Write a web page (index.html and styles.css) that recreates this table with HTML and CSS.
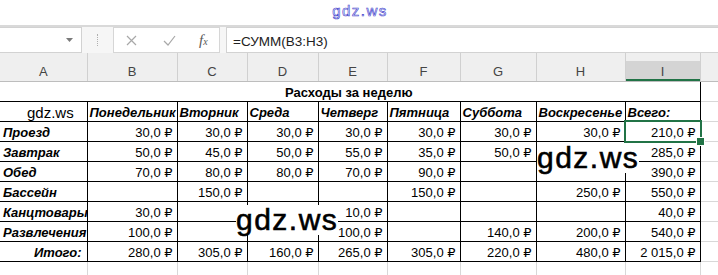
FILE: index.html
```html
<!DOCTYPE html>
<html lang="ru">
<head>
<meta charset="utf-8">
<title>Расходы за неделю</title>
<link rel="stylesheet" href="styles.css">
</head>
<body>
<div class="topbar"><span class="wm-top">gdz.ws</span></div>
<div class="fbar">
  <div class="namebox"><svg class="dd" width="7" height="4" viewBox="0 0 7 4"><path d="M0 0h7L3.5 4z" fill="#7a7a7a"/></svg></div>
  <div class="grip"><span class="dots"></span></div>
  <div class="btns">
    <svg class="ic" width="11" height="11" viewBox="0 0 11 11"><path d="M1 1l9 9M10 1l-9 9" stroke="#a8a8a8" stroke-width="1.2" fill="none"/></svg>
    <svg class="ic" width="13" height="11" viewBox="0 0 13 11"><path d="M1 6l4 4 7-9" stroke="#a8a8a8" stroke-width="1.2" fill="none"/></svg>
    <span class="fx">f<span class="fx-x">x</span></span>
  </div>
  <div class="formula">=СУММ(B3:H3)</div>
</div>
<table class="sheet">
  <colgroup>
    <col class="w87"><col class="w90"><col class="w70"><col class="w71"><col class="w69"><col class="w73"><col class="w76"><col class="w89"><col class="w75"><col class="w18">
  </colgroup>
  <thead>
    <tr><th>A</th><th>B</th><th>C</th><th>D</th><th>E</th><th>F</th><th>G</th><th>H</th><th class="sel">I</th><th></th></tr>
  </thead>
  <tbody>
    <tr><td class="title" colspan="9">Расходы за неделю</td><td class="g"></td></tr>
    <tr class="hdr"><td class="wm-a">gdz.ws</td><td>Понедельник</td><td>Вторник</td><td>Среда</td><td>Четверг</td><td>Пятница</td><td>Суббота</td><td>Воскресенье</td><td>Всего:</td><td class="g"></td></tr>
    <tr><td class="lbl">Проезд</td><td class="n">30,0&nbsp;₽</td><td class="n">30,0&nbsp;₽</td><td class="n">30,0&nbsp;₽</td><td class="n">30,0&nbsp;₽</td><td class="n">30,0&nbsp;₽</td><td class="n">30,0&nbsp;₽</td><td class="n">30,0&nbsp;₽</td><td class="n selcell">210,0&nbsp;₽</td><td class="g"></td></tr>
    <tr><td class="lbl">Завтрак</td><td class="n">50,0&nbsp;₽</td><td class="n">45,0&nbsp;₽</td><td class="n">50,0&nbsp;₽</td><td class="n">55,0&nbsp;₽</td><td class="n">35,0&nbsp;₽</td><td class="n">50,0&nbsp;₽</td><td class="n"></td><td class="n">285,0&nbsp;₽</td><td class="g"></td></tr>
    <tr><td class="lbl">Обед</td><td class="n">70,0&nbsp;₽</td><td class="n">80,0&nbsp;₽</td><td class="n">80,0&nbsp;₽</td><td class="n">70,0&nbsp;₽</td><td class="n">90,0&nbsp;₽</td><td class="n"></td><td class="n"></td><td class="n">390,0&nbsp;₽</td><td class="g"></td></tr>
    <tr><td class="lbl">Бассейн</td><td class="n"></td><td class="n">150,0&nbsp;₽</td><td class="n"></td><td class="n"></td><td class="n">150,0&nbsp;₽</td><td class="n"></td><td class="n">250,0&nbsp;₽</td><td class="n">550,0&nbsp;₽</td><td class="g"></td></tr>
    <tr><td class="lbl">Канцтовары</td><td class="n">30,0&nbsp;₽</td><td class="n"></td><td class="n"></td><td class="n">10,0&nbsp;₽</td><td class="n"></td><td class="n"></td><td class="n"></td><td class="n">40,0&nbsp;₽</td><td class="g"></td></tr>
    <tr><td class="lbl">Развлечения</td><td class="n">100,0&nbsp;₽</td><td class="n"></td><td class="n"></td><td class="n">100,0&nbsp;₽</td><td class="n"></td><td class="n">140,0&nbsp;₽</td><td class="n">200,0&nbsp;₽</td><td class="n">540,0&nbsp;₽</td><td class="g"></td></tr>
    <tr><td class="lbl total">Итого:</td><td class="n">280,0&nbsp;₽</td><td class="n">305,0&nbsp;₽</td><td class="n">160,0&nbsp;₽</td><td class="n">265,0&nbsp;₽</td><td class="n">305,0&nbsp;₽</td><td class="n">220,0&nbsp;₽</td><td class="n">480,0&nbsp;₽</td><td class="n">2&nbsp;015,0&nbsp;₽</td><td class="g"></td></tr>
    <tr class="empty"><td class="g"></td><td class="g"></td><td class="g"></td><td class="g"></td><td class="g"></td><td class="g"></td><td class="g"></td><td class="g"></td><td class="g"></td><td class="g"></td></tr>
  </tbody>
</table>
<div class="wm wm-1">gdz.ws</div>
<div class="wm wm-2">gdz.ws</div>
</body>
</html>
```
FILE: styles.css
```css
* { box-sizing: border-box; }
html, body { margin: 0; padding: 0; background: #fff; }
body {
  width: 718px;
  height: 275px;
  overflow: hidden;
  position: relative;
  font-family: "Liberation Sans", "DejaVu Sans", Arial, sans-serif;
  color: #000;
}

/* top strip */
.topbar {
  height: 27px;
  border-bottom: 2px solid #d9d9d9;
  display: flex;
  justify-content: center;
  align-items: flex-start;
}
.wm-top {
  font-size: 15px;
  line-height: 21px;
  letter-spacing: 1.5px;
  color: #f4f4ff;
  -webkit-text-stroke: 0.6px #4444cc;
  margin-left: 2px;
}

/* formula bar */
.fbar {
  height: 26px;
  display: flex;
  background: #f6f6f6;
}
.namebox {
  width: 82px;
  background: #fff;
  border: 1px solid #d2d2d2;
  border-left: 0;
  display: flex;
  align-items: center;
  justify-content: flex-end;
  padding-right: 8px;
}
.dd { margin-top: -1px; }
.grip {
  width: 31px;
  display: flex;
  justify-content: center;
  align-items: center;
}
.dots {
  width: 1px;
  height: 12px;
  border-left: 1px dotted #b0b0b0;
}
.btns {
  width: 107px;
  background: #fff;
  border: 1px solid #d6d6d6;
  display: flex;
  align-items: center;
  padding-left: 12px;
}
.btns .ic:first-child { margin-right: 26px; }
.btns .ic + .ic { margin-right: 23px; }
.fx {
  font-family: "Liberation Serif", "DejaVu Serif", serif;
  font-style: italic;
  font-size: 15px;
  color: #5a5a5a;
  line-height: 1;
}
.fx-x { font-size: 10px; }
.formula {
  flex: 1;
  margin-left: 6px;
  background: #fff;
  border: 1px solid #d2d2d2;
  border-right: 0;
  padding: 5px 0 0 6px;
  font-size: 13.5px;
  line-height: 18px;
  color: #222;
}

/* sheet */
.sheet {
  border-collapse: collapse;
  table-layout: fixed;
  width: 718px;
  font-size: 13px;
}
.w87 { width: 87px; }
.w90 { width: 90px; }
.w70 { width: 70px; }
.w71 { width: 71px; }
.w69 { width: 69px; }
.w73 { width: 73px; }
.w76 { width: 76px; }
.w89 { width: 89px; }
.w75 { width: 75px; }
.w18 { width: 18px; }

.sheet thead tr { height: 28px; }
.sheet th {
  background: #efefef;
  border-right: 1px solid #d0d0d0;
  border-bottom: 1px solid #bdbdbd;
  font-weight: normal;
  color: #444;
  font-size: 13px;
  line-height: 16px;
  vertical-align: bottom;
  padding: 0 0 1px;
  text-align: center;
}
.sheet th.sel {
  background: linear-gradient(#efefef 0, #efefef 8px, #d4d4d4 8px);
  box-shadow: inset 0 -2px 0 #217346;
}

.sheet tbody tr { height: 20px; }
.sheet td {
  border: 1px solid #000;
  padding: 0 4px 0 3px;
  line-height: 17px;
  vertical-align: bottom;
  white-space: nowrap;
  overflow: hidden;
}
.sheet td:first-child { border-left: 0; }
.sheet td.g { border-color: #d8d8d8; }
.sheet td.title {
  border-top: 0;
  font-weight: bold;
  text-align: center;
  padding-left: 2px;
}
.hdr td { font-weight: bold; font-style: italic; padding-left: 2px; }
.hdr td.wm-a {
  font-weight: normal;
  font-style: normal;
  font-size: 15px;
  padding-left: 27px;
}
.lbl { font-weight: bold; font-style: italic; }
.lbl.total { text-align: right; padding-right: 5px; }
.n { text-align: right; }
.empty td { border-bottom: 0; }

.selcell { position: relative; overflow: visible !important; }
.selcell::after {
  content: "";
  position: absolute;
  left: -2px;
  top: -2px;
  right: -2px;
  bottom: -2px;
  border: 2px solid #217346;
}
.selcell::before {
  content: "";
  position: absolute;
  right: -5px;
  bottom: -5px;
  width: 7px;
  height: 7px;
  background: #217346;
  border: 1px solid #fff;
  z-index: 2;
}

/* watermarks lying over the grid */
.wm {
  position: absolute;
  font-size: 30px;
  line-height: 30px;
  letter-spacing: 1.5px;
  background: #fff;
  color: #000;
  -webkit-text-stroke: 0.6px #000;
}
.wm-1 { left: 537px; top: 143px; }
.wm-2 { left: 236px; top: 205px; }
```
